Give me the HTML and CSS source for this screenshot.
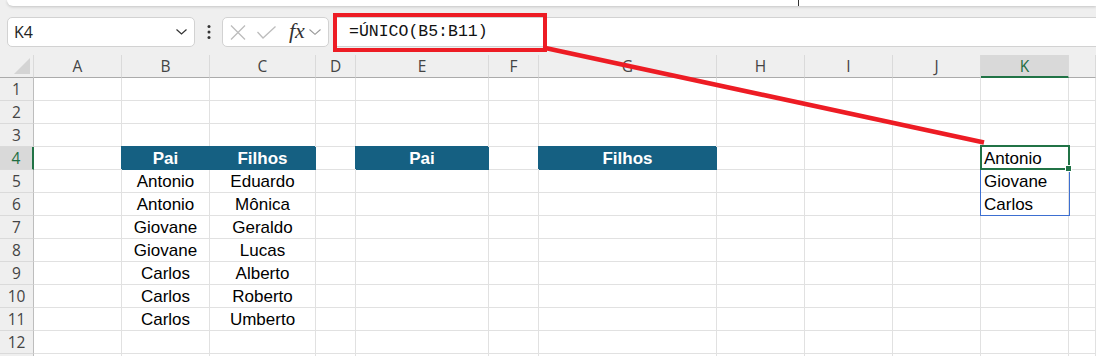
FILE: index.html
```html
<!DOCTYPE html>
<html lang="pt-br">
<head>
    <meta charset="UTF-8">
    <title>UNICO - Planilha</title>
    <link rel="stylesheet" href="styles.css">
</head>
<body>
    <!-- Faixa superior -->
    <div class="topbar"><span class="caret"></span></div>

    <!-- Barra de fórmulas -->
    <div class="formula-row">
        <div class="namebox">
            <span>K4</span>
            <svg width="11" height="6" viewBox="0 0 11 6"><polyline points="0.5,0.5 5.5,5 10.5,0.5" fill="none" stroke="#333" stroke-width="1.2"/></svg>
        </div>
        <svg class="dots" width="4" height="14" viewBox="0 0 4 14">
            <circle cx="2" cy="1.6" r="1.5" fill="#333"/>
            <circle cx="2" cy="7" r="1.5" fill="#333"/>
            <circle cx="2" cy="12.4" r="1.5" fill="#333"/>
        </svg>
        <div class="fbuttons">
            <svg width="16" height="15" viewBox="0 0 16 15"><path d="M1 0.5 L15 14.5 M15 0.5 L1 14.5" stroke="#bdbdbd" stroke-width="1.3"/></svg>
            <svg width="19" height="13" viewBox="0 0 19 13"><polyline points="0.5,6 6,12 18.5,0.5" fill="none" stroke="#bdbdbd" stroke-width="1.3"/></svg>
            <span class="fx">fx</span>
            <svg width="12" height="6" viewBox="0 0 12 6"><polyline points="0.5,0.5 6,5.3 11.5,0.5" fill="none" stroke="#999" stroke-width="1.1"/></svg>
        </div>
        <div class="formula">=ÚNICO(B5:B11)</div>
        <!-- destaque vermelho -->
        <div class="callout"></div>
    </div>

    <!-- Planilha -->
    <div class="sheet">
        <div class="c ch corner"><svg width="16" height="16" viewBox="0 0 16 16"><polygon points="16,0 16,16 0,16" fill="#d4d4d4"/></svg></div>
        <div class="c ch">A</div><div class="c ch">B</div><div class="c ch">C</div><div class="c ch">D</div><div class="c ch">E</div><div class="c ch">F</div><div class="c ch">G</div><div class="c ch">H</div><div class="c ch">I</div><div class="c ch">J</div><div class="c ch on">K</div><div class="c ch"></div>

        <div class="c rh">1</div><div class="c"></div><div class="c"></div><div class="c"></div><div class="c"></div><div class="c"></div><div class="c"></div><div class="c"></div><div class="c"></div><div class="c"></div><div class="c"></div><div class="c"></div><div class="c"></div>
        <div class="c rh">2</div><div class="c"></div><div class="c"></div><div class="c"></div><div class="c"></div><div class="c"></div><div class="c"></div><div class="c"></div><div class="c"></div><div class="c"></div><div class="c"></div><div class="c"></div><div class="c"></div>
        <div class="c rh">3</div><div class="c"></div><div class="c"></div><div class="c"></div><div class="c"></div><div class="c"></div><div class="c"></div><div class="c"></div><div class="c"></div><div class="c"></div><div class="c"></div><div class="c"></div><div class="c"></div>

        <div class="c rh on">4</div><div class="c"></div><div class="c hd">Pai</div><div class="c hd">Filhos</div><div class="c"></div><div class="c hd">Pai</div><div class="c"></div><div class="c hd">Filhos</div><div class="c"></div><div class="c"></div><div class="c"></div><div class="c l">Antonio</div><div class="c"></div>
        <div class="c rh">5</div><div class="c"></div><div class="c">Antonio</div><div class="c">Eduardo</div><div class="c"></div><div class="c"></div><div class="c"></div><div class="c"></div><div class="c"></div><div class="c"></div><div class="c"></div><div class="c l">Giovane</div><div class="c"></div>
        <div class="c rh">6</div><div class="c"></div><div class="c">Antonio</div><div class="c">Mônica</div><div class="c"></div><div class="c"></div><div class="c"></div><div class="c"></div><div class="c"></div><div class="c"></div><div class="c"></div><div class="c l">Carlos</div><div class="c"></div>
        <div class="c rh">7</div><div class="c"></div><div class="c">Giovane</div><div class="c">Geraldo</div><div class="c"></div><div class="c"></div><div class="c"></div><div class="c"></div><div class="c"></div><div class="c"></div><div class="c"></div><div class="c"></div><div class="c"></div>
        <div class="c rh">8</div><div class="c"></div><div class="c">Giovane</div><div class="c">Lucas</div><div class="c"></div><div class="c"></div><div class="c"></div><div class="c"></div><div class="c"></div><div class="c"></div><div class="c"></div><div class="c"></div><div class="c"></div>
        <div class="c rh">9</div><div class="c"></div><div class="c">Carlos</div><div class="c">Alberto</div><div class="c"></div><div class="c"></div><div class="c"></div><div class="c"></div><div class="c"></div><div class="c"></div><div class="c"></div><div class="c"></div><div class="c"></div>
        <div class="c rh">10</div><div class="c"></div><div class="c">Carlos</div><div class="c">Roberto</div><div class="c"></div><div class="c"></div><div class="c"></div><div class="c"></div><div class="c"></div><div class="c"></div><div class="c"></div><div class="c"></div><div class="c"></div>
        <div class="c rh">11</div><div class="c"></div><div class="c">Carlos</div><div class="c">Umberto</div><div class="c"></div><div class="c"></div><div class="c"></div><div class="c"></div><div class="c"></div><div class="c"></div><div class="c"></div><div class="c"></div><div class="c"></div>
        <div class="c rh">12</div><div class="c"></div><div class="c"></div><div class="c"></div><div class="c"></div><div class="c"></div><div class="c"></div><div class="c"></div><div class="c"></div><div class="c"></div><div class="c"></div><div class="c"></div><div class="c"></div>
        <div class="c rh"></div><div class="c"></div><div class="c"></div><div class="c"></div><div class="c"></div><div class="c"></div><div class="c"></div><div class="c"></div><div class="c"></div><div class="c"></div><div class="c"></div><div class="c"></div><div class="c"></div>

        <!-- Seleção e intervalo de despejo -->
        <div class="spill"></div>
        <div class="active"><span class="handle"></span></div>
    </div>

    <!-- Linha vermelha ligando a fórmula ao resultado -->
    <svg class="arrow" width="1096" height="356" viewBox="0 0 1096 356">
        <line x1="543" y1="47.5" x2="984" y2="142.5" stroke="#ed1c24" stroke-width="4.6"/>
    </svg>
</body>
</html>
```

FILE: styles.css
```css
/* Estilos gerais */
body {
    margin: 0;
    width: 1096px;
    height: 356px;
    overflow: hidden;
    background-color: #efefef;
    font-family: "Open Sans", "Liberation Sans", sans-serif;
    position: relative;
}

/* Faixa superior */
.topbar {
    margin-left: 7px;
    height: 6px;
    background-color: #fff;
    border-bottom-left-radius: 8px;
    box-shadow: 0 1px 3px rgba(0, 0, 0, 0.18);
}

.caret {
    display: block;
    margin-left: 791px;
    width: 1px;
    height: 6px;
    background-color: #333;
}

/* Barra de fórmulas */
.formula-row {
    display: flex;
    align-items: center;
    height: 30px;
    margin-top: 11px;
    margin-bottom: 8px;
    position: relative;
}

.namebox {
    margin-left: 7px;
    width: 188px;
    height: 30px;
    box-sizing: border-box;
    background-color: #fff;
    border: 1px solid #d2d2d2;
    border-radius: 5px;
    display: flex;
    align-items: center;
    justify-content: space-between;
    padding: 0 7px 0 6px;
    font-size: 16px;
    color: #222;
}

.dots {
    margin: 0 11px 0 12px;
}

.fbuttons {
    width: 107px;
    height: 30px;
    box-sizing: border-box;
    background-color: #fff;
    border: 1px solid #d2d2d2;
    border-radius: 5px;
    display: flex;
    align-items: center;
    padding-left: 7px;
}

.fbuttons svg:nth-child(2) {
    margin-left: 11px;
}

.fx {
    font-family: "Liberation Serif", serif;
    font-style: italic;
    font-size: 22px;
    color: #333;
    margin-left: 13px;
    margin-right: 4px;
    line-height: 1;
    margin-top: -3px;
}

.formula {
    flex: 1;
    margin-left: 6px;
    height: 30px;
    box-sizing: border-box;
    background-color: #fff;
    border-top: 1px solid #d2d2d2;
    border-bottom: 1px solid #d2d2d2;
    padding-left: 14px;
    font-family: "Liberation Mono", monospace;
    font-size: 16.5px;
    line-height: 28px;
    color: #111;
}

.callout {
    position: absolute;
    left: 333px;
    top: -4px;
    width: 214px;
    height: 39px;
    box-sizing: border-box;
    border: 4px solid #ed1c24;
}

/* Planilha */
.sheet {
    display: grid;
    grid-template-columns: 34px 88px 88px 106px 40px 133px 50px 178px 88px 88px 88px 88px 1fr;
    grid-auto-rows: 23px;
    background-color: #fff;
    position: relative;
}

.c {
    box-sizing: border-box;
    border-right: 1px solid #e1e1e1;
    border-bottom: 1px solid #e1e1e1;
    font-family: "Liberation Sans", Arial, sans-serif;
    font-size: 17px;
    line-height: 24px;
    text-align: center;
    color: #000;
    white-space: nowrap;
    overflow: hidden;
}

.c.l {
    text-align: left;
    padding-left: 3px;
}

/* Cabeçalhos de coluna e linha */
.ch, .rh {
    background-color: #efefef;
    font-family: "Open Sans", sans-serif;
    font-size: 15.5px;
    line-height: 22px;
    color: #444;
}

.ch {
    border-right-color: #dadada;
    border-bottom-color: #ababab;
}

.rh {
    border-right-color: #bdbdbd;
    border-bottom-color: #dadada;
}

.ch.on {
    background-color: #d9d9d9;
    color: #1e6e42;
    border-bottom: 2px solid #217346;
}

.rh.on {
    background-color: #d9d9d9;
    color: #1e6e42;
    border-right: 2px solid #217346;
}

.corner {
    display: flex;
    align-items: flex-end;
    justify-content: flex-end;
    padding: 0 3px 3px 0;
}

/* Células de título */
.hd {
    background-color: #156082;
    color: #fff;
    font-weight: bold;
    border-color: #156082;
    box-shadow: -1px -1px 0 #156082;
}

/* Seleção */
.spill {
    position: absolute;
    left: 980px;
    top: 90px;
    width: 90px;
    height: 71px;
    box-sizing: border-box;
    border: 1px solid #3d6fd1;
}

.active {
    position: absolute;
    left: 980px;
    top: 90px;
    width: 90px;
    height: 25px;
    box-sizing: border-box;
    border: 2px solid #217346;
}

.handle {
    position: absolute;
    right: -4px;
    bottom: -4px;
    width: 5px;
    height: 5px;
    background-color: #217346;
    border: 1px solid #fff;
}

/* Linha vermelha */
.arrow {
    position: absolute;
    left: 0;
    top: 0;
    pointer-events: none;
}
```
